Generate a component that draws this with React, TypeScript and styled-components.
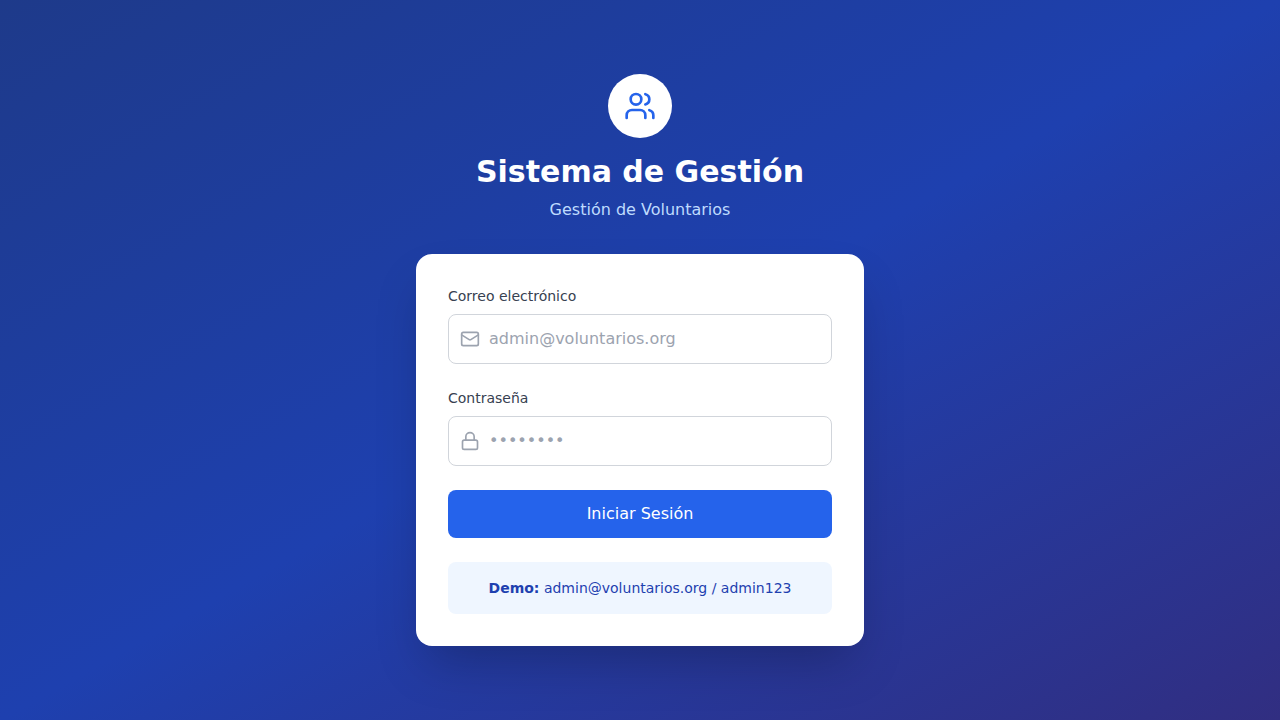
import React, { useState } from 'react';
import styled, { createGlobalStyle } from 'styled-components';
import { Lock, Mail, Users } from 'lucide-react';

const GlobalStyle = createGlobalStyle`
  *, *::before, *::after { box-sizing: border-box; }
  body {
    margin: 0;
    font-family: "DejaVu Sans", sans-serif;
    font-size: 16px;
    line-height: 24px;
  }
  h1, p { margin: 0; }
`;

const Page = styled.main`
  min-height: 100vh;
  display: flex;
  align-items: center;
  justify-content: center;
  padding: 16px;
  background: linear-gradient(to bottom right, #1e3a8a, #1e40af, #312e81);
`;

const Content = styled.div`
  width: 100%;
  max-width: 448px;
`;

const Header = styled.header`
  margin-bottom: 32px;
  text-align: center;
`;

const LogoBadge = styled.div`
  display: inline-flex;
  vertical-align: top;
  align-items: center;
  justify-content: center;
  width: 64px;
  height: 64px;
  margin-bottom: 16px;
  border-radius: 50%;
  background: #fff;
  color: #2563eb;
`;

const Title = styled.h1`
  margin-bottom: 8px;
  color: #fff;
  font-size: 30px;
  line-height: 36px;
  font-weight: 700;
`;

const Subtitle = styled.p`
  color: #bfdbfe;
`;

const Card = styled.section`
  padding: 32px;
  border-radius: 16px;
  background: #fff;
  box-shadow: 0 25px 50px -12px rgba(0, 0, 0, 0.25);
`;

const Form = styled.form`
  display: flex;
  flex-direction: column;
  gap: 24px;
`;

const Label = styled.label`
  display: block;
  margin-bottom: 8px;
  color: #374151;
  font-size: 14px;
  line-height: 20px;
`;

const InputFrame = styled.div`
  display: flex;
  align-items: center;
  gap: 8px;
  padding-left: 11px;
  border: 1px solid #d1d5db;
  border-radius: 8px;
  color: #9ca3af;

  &:focus-within {
    border-color: #2563eb;
  }
  svg {
    flex: none;
  }
`;

const Input = styled.input`
  flex: 1;
  min-width: 0;
  padding: 12px 12px 12px 1px;
  border: 0;
  border-radius: 8px;
  outline: 0;
  background: transparent;
  color: #111827;
  font: inherit;

  &::placeholder {
    color: #9ca3af;
    opacity: 1;
  }
`;

const SubmitButton = styled.button`
  padding: 12px 16px;
  border: 0;
  border-radius: 8px;
  background: #2563eb;
  color: #fff;
  font: inherit;
  cursor: pointer;

  &:hover {
    background: #1d4ed8;
  }
`;

const DemoNote = styled.p`
  margin-top: 24px;
  padding: 16px;
  border-radius: 8px;
  background: #eff6ff;
  color: #1e40af;
  font-size: 14px;
  line-height: 20px;
  text-align: center;
`;

export default function App() {
  const [email, setEmail] = useState('');
  const [password, setPassword] = useState('');

  return (
    <>
      <GlobalStyle />
      <Page>
        <Content>
          <Header>
            <LogoBadge>
              <Users size={32} aria-hidden="true" />
            </LogoBadge>
            <Title>Sistema de Gestión</Title>
            <Subtitle>Gestión de Voluntarios</Subtitle>
          </Header>
          <Card>
            <Form onSubmit={(event) => event.preventDefault()}>
              <div>
                <Label htmlFor="email">Correo electrónico</Label>
                <InputFrame>
                  <Mail size={20} aria-hidden="true" />
                  <Input
                    id="email"
                    type="email"
                    placeholder="admin@voluntarios.org"
                    value={email}
                    onChange={(event) => setEmail(event.target.value)}
                  />
                </InputFrame>
              </div>
              <div>
                <Label htmlFor="password">Contraseña</Label>
                <InputFrame>
                  <Lock size={20} aria-hidden="true" />
                  <Input
                    id="password"
                    type="password"
                    placeholder="••••••••"
                    value={password}
                    onChange={(event) => setPassword(event.target.value)}
                  />
                </InputFrame>
              </div>
              <SubmitButton type="submit">Iniciar Sesión</SubmitButton>
            </Form>
            <DemoNote>
              <strong>Demo:</strong> admin@voluntarios.org / admin123
            </DemoNote>
          </Card>
        </Content>
      </Page>
    </>
  );
}
